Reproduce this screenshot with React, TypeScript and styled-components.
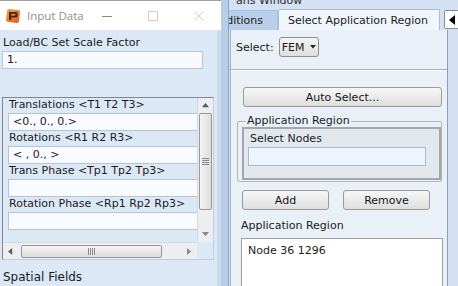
import React from 'react';
import styled, { createGlobalStyle } from 'styled-components';

const Global = createGlobalStyle`
  html, body { margin: 0; padding: 0; background: #dde8f6; }
  body { font-family: "DejaVu Sans", Verdana, sans-serif; font-size: 11px; color: #1b1b1b; }
  * { box-sizing: border-box; }
`;

const Screen = styled.div`
  display: flex;
  width: 458px;
  height: 286px;
  overflow: hidden;
`;

const LeftWindow = styled.div`
  width: 221px;
  flex: none;
  display: flex;
  flex-direction: column;
  border-top: 1px solid #a0a0a0;
`;

const TitleBar = styled.div`
  height: 29px;
  flex: none;
  background: #ffffff;
  display: flex;
  align-items: center;
  padding-left: 5px;
`;

const TitleText = styled.span`
  font-family: "Open Sans", "Noto Sans", sans-serif;
  font-size: 11.5px;
  color: #8e8e8e;
  margin-left: 6px;
  white-space: nowrap;
`;

const WinControls = styled.div`
  margin-left: auto;
  display: flex;
  height: 100%;
`;

const WinButton = styled.div`
  width: 46px;
  display: flex;
  align-items: center;
  justify-content: center;
`;

const LeftBody = styled.div`
  flex: 1;
  background: #dde8f6;
  border-right: 4px solid #c9d9ee;
  padding: 6px 0 0 2px;
  display: flex;
  flex-direction: column;
`;

const FieldLabel = styled.div`
  line-height: 14px;
  padding-left: 1px;
  white-space: nowrap;
`;

const ScaleInput = styled.div`
  width: 201px;
  height: 18px;
  margin-top: 1px;
  background: #f6f9fd;
  border: 1px solid #b9c6d6;
  padding-left: 4px;
  line-height: 16px;
`;

const ScrollPanel = styled.div`
  margin-top: 28px;
  width: 212px;
  height: 163px;
  border: 1px solid #7f8690;
  border-right-color: #c4ccd6;
  border-bottom-color: #c4ccd6;
  display: grid;
  grid-template-columns: 1fr 16px;
  grid-template-rows: 1fr 17px;
  background: #dde8f6;
`;

const PanelRows = styled.div`
  display: flex;
  flex-direction: column;
  padding-left: 5px;
  overflow: hidden;
`;

const RowLabel = styled.div`
  height: 15px;
  line-height: 14px;
  padding-left: 1px;
  white-space: nowrap;
`;

const RowInput = styled.div`
  height: 18px;
  background: #f8fbff;
  border: 1px solid #b7c4d4;
  border-right: none;
  padding-left: 4px;
  line-height: 16px;
  white-space: nowrap;
`;

const VScroll = styled.div`
  background: #eceef1;
  border-left: 1px solid #d5d9de;
  display: flex;
  flex-direction: column;
  align-items: center;
`;

const ArrowCell = styled.div<{ $h?: number; $w?: number }>`
  height: ${(p) => p.$h ?? 15}px;
  width: ${(p) => p.$w ?? 15}px;
  flex: none;
  display: flex;
  align-items: center;
  justify-content: center;
`;

const Spacer = styled.div`
  flex: 1;
`;

const VThumb = styled.div`
  width: 13px;
  height: 97px;
  border: 1px solid #979797;
  border-radius: 2px;
  background: linear-gradient(to right, #f4f4f4, #dcdcdc);
  display: flex;
  align-items: center;
  justify-content: center;
`;

const HScroll = styled.div`
  background: #eceef1;
  border-top: 1px solid #d5d9de;
  display: flex;
  align-items: center;
`;

const HThumb = styled.div`
  width: 141px;
  height: 13px;
  margin-left: 3px;
  border: 1px solid #979797;
  border-radius: 2px;
  background: linear-gradient(to bottom, #f4f4f4, #dcdcdc);
  display: flex;
  align-items: center;
  justify-content: center;
`;

const Corner = styled.div`
  background: #dde8f6;
`;

const SectionLabel = styled.div`
  margin-top: 10px;
  font-size: 12px;
  line-height: 14px;
  padding-left: 1px;
`;

const Gutter = styled.div`
  width: 7px;
  flex: none;
  background: #b9cde6;
`;

const RightWindow = styled.div`
  flex: 1;
  display: flex;
  flex-direction: column;
  background: #d3e1f2;
  border-left: 1px solid #8ea5c1;
`;

const TopStrip = styled.div`
  height: 9px;
  flex: none;
  padding-left: 7px;
  overflow: hidden;
  display: flex;
  align-items: flex-end;
`;

const TopText = styled.span`
  font-size: 11px;
  line-height: 11px;
  height: 11px;
  margin-bottom: 3px;
  flex: none;
  color: #2c2c2c;
  white-space: nowrap;
`;

const TabRow = styled.div`
  height: 21px;
  flex: none;
  display: flex;
  align-items: flex-end;
`;

const Tab = styled.div<{ $active?: boolean }>`
  height: ${(p) => (p.$active ? 21 : 20)}px;
  display: flex;
  align-items: center;
  white-space: nowrap;
  overflow: hidden;
  background: ${(p) => (p.$active ? '#f1f6fc' : '#b9cfe9')};
  border: 1px solid ${(p) => (p.$active ? '#a8bcd6' : '#a9c0dd')};
  border-bottom: none;
  border-radius: 2px 2px 0 0;
`;

const ClippedTab = styled(Tab)`
  width: 49px;
  justify-content: flex-end;
  padding-right: 14px;
  border-left: none;
`;

const ActiveTab = styled(Tab)`
  width: 162px;
  padding-left: 9px;
`;

const TabScroll = styled.div`
  margin-left: 4px;
  margin-bottom: 1px;
  width: 16px;
  height: 19px;
  flex: none;
  background: #ffffff;
  border: 1px solid #8c8c8c;
  border-radius: 2px;
  display: flex;
  align-items: center;
  justify-content: center;
`;

const TabPage = styled.div`
  flex: 1;
  width: 218px;
  margin-left: 1px;
  background: #e9f0f8;
  border-left: 1px solid #9fb3cc;
  border-right: 1px solid #8e9db0;
  display: flex;
  flex-direction: column;
`;

const SelectRow = styled.div`
  display: flex;
  align-items: center;
  gap: 5px;
  margin-top: 7px;
  padding-left: 5px;
  height: 20px;
`;

const Dropdown = styled.div`
  width: 40px;
  height: 20px;
  border: 1px solid #8d8d8d;
  border-radius: 3px;
  background: linear-gradient(to bottom, #f5f5f5, #dedede);
  display: flex;
  align-items: center;
  padding-left: 2px;
  gap: 6px;
`;

const Separator = styled.div`
  margin-top: 12px;
  height: 2px;
  border-top: 1px solid #a9adb3;
  border-bottom: 1px solid #ffffff;
`;

const Button = styled.div<{ $w: number }>`
  width: ${(p) => p.$w}px;
  height: 20px;
  flex: none;
  border: 1px solid #9a9a9a;
  border-radius: 3px;
  background: linear-gradient(to bottom, #f7f7f7, #dedede);
  display: flex;
  align-items: center;
  justify-content: center;
  color: #151515;
`;

const AutoButton = styled(Button)`
  margin: 16px 0 0 12px;
`;

const Group = styled.fieldset`
  margin: 8px 0 0 6px;
  width: 205px;
  padding: 0 0 1px 4px;
  border: 1px solid #b2b6bb;
  border-radius: 2px;
  min-width: 0;
`;

const Legend = styled.legend`
  padding: 0 1px;
  margin-left: 4px;
  line-height: 12px;
`;

const InnerBox = styled.div`
  height: 53px;
  border: 2px solid #a3a6aa;
  background: #e3e8ef;
  padding: 3px 0 0 4px;
`;

const InnerLabel = styled.div`
  line-height: 14px;
  padding-left: 2px;
`;

const InnerInput = styled.div`
  margin-top: 1px;
  width: 178px;
  height: 19px;
  background: #eef4fb;
  border: 1px solid #a9bbd1;
`;

const ButtonRow = styled.div`
  display: flex;
  gap: 14px;
  margin: 8px 0 0 11px;
`;

const PlainLabel = styled.div`
  margin: 9px 0 0 10px;
  line-height: 14px;
`;

const TextArea = styled.div`
  margin: 5px 0 0 10px;
  width: 202px;
  height: 60px;
  background: #ffffff;
  border: 1px solid #9d9d9d;
  padding: 5px 6px;
  line-height: 14px;
`;

const Triangle = ({ dir, size = 7, color = '#5a5a5a' }: { dir: 'up' | 'down' | 'left' | 'right'; size?: number; color?: string }) => {
  const s = size;
  const pts: Record<string, string> = {
    up: `0,${s * 0.6} ${s / 2},0 ${s},${s * 0.6}`,
    down: `0,0 ${s / 2},${s * 0.6} ${s},0`,
    left: `${s * 0.6},0 0,${s / 2} ${s * 0.6},${s}`,
    right: `0,0 ${s * 0.6},${s / 2} 0,${s}`,
  };
  const vertical = dir === 'up' || dir === 'down';
  return (
    <svg width={vertical ? s : s * 0.6} height={vertical ? s * 0.6 : s} style={{ display: 'block' }}>
      <polygon points={pts[dir]} fill={color} />
    </svg>
  );
};

const Grip = ({ vertical }: { vertical?: boolean }) => (
  <svg width={7} height={7} style={{ display: 'block' }}>
    {[0, 2, 4, 6].map((i) =>
      vertical ? (
        <rect key={i} x={0} y={i} width={7} height={1} fill="#8a8a8a" />
      ) : (
        <rect key={i} x={i} y={0} width={1} height={7} fill="#8a8a8a" />
      )
    )}
  </svg>
);

const AppIcon = () => (
  <svg width="16" height="16" viewBox="0 0 16 16" style={{ display: 'block', flex: 'none' }}>
    <defs>
      <linearGradient id="ig" x1="0" y1="0" x2="1" y2="1">
        <stop offset="0" stopColor="#f7a14a" />
        <stop offset="1" stopColor="#d9601c" />
      </linearGradient>
    </defs>
    <path d="M2 3 Q2 1 4 1 L13 2 Q15 2 15 4 L14 13 Q14 15 12 15 L3 14 Q1 14 1 12 Z" fill="url(#ig)" />
    <path d="M4 4 H11 Q12.5 4 12.5 5.5 V8 Q12.5 9.5 11 9.5 H6.2 V12 H4 Z M6.2 5.8 V7.8 H10.3 V5.8 Z" fill="#4a2510" fillRule="evenodd" />
  </svg>
);

const Minimize = () => (
  <svg width="10" height="10" style={{ display: 'block' }}>
    <rect x="0" y="5" width="10" height="1" fill="#8a8a8a" />
  </svg>
);
const Maximize = () => (
  <svg width="10" height="10" style={{ display: 'block' }}>
    <rect x="0.5" y="0.5" width="9" height="9" fill="none" stroke="#d0d0d0" />
  </svg>
);
const Close = () => (
  <svg width="10" height="10" style={{ display: 'block' }}>
    <path d="M0.5 0.5 L9.5 9.5 M9.5 0.5 L0.5 9.5" stroke="#d0d0d0" strokeWidth="1" />
  </svg>
);

const rows = [
  { label: 'Translations <T1 T2 T3>', value: '<0., 0., 0.>' },
  { label: 'Rotations <R1 R2 R3>', value: '< , 0., >' },
  { label: 'Trans Phase <Tp1 Tp2 Tp3>', value: '' },
  { label: 'Rotation Phase <Rp1 Rp2 Rp3>', value: '' },
];

export default function App() {
  return (
    <>
      <Global />
      <Screen>
        <LeftWindow>
          <TitleBar>
            <AppIcon />
            <TitleText>Input Data</TitleText>
            <WinControls>
              <WinButton><Minimize /></WinButton>
              <WinButton><Maximize /></WinButton>
              <WinButton><Close /></WinButton>
            </WinControls>
          </TitleBar>
          <LeftBody>
            <FieldLabel>Load/BC Set Scale Factor</FieldLabel>
            <ScaleInput>1.</ScaleInput>
            <ScrollPanel>
              <PanelRows>
                {rows.map((r) => (
                  <React.Fragment key={r.label}>
                    <RowLabel>{r.label}</RowLabel>
                    <RowInput>{r.value}</RowInput>
                  </React.Fragment>
                ))}
              </PanelRows>
              <VScroll>
                <ArrowCell $h={15}><Triangle dir="up" /></ArrowCell>
                <VThumb><Grip vertical /></VThumb>
                <Spacer />
                <ArrowCell $h={15}><Triangle dir="down" color="#8a8a8a" /></ArrowCell>
              </VScroll>
              <HScroll>
                <ArrowCell $w={15}><Triangle dir="left" /></ArrowCell>
                <HThumb><Grip /></HThumb>
                <Spacer />
                <ArrowCell $w={15}><Triangle dir="right" color="#8a8a8a" /></ArrowCell>
              </HScroll>
              <Corner />
            </ScrollPanel>
            <SectionLabel>Spatial Fields</SectionLabel>
          </LeftBody>
        </LeftWindow>
        <Gutter />
        <RightWindow>
          <TopStrip>
            <TopText>ans Window</TopText>
          </TopStrip>
          <TabRow>
            <ClippedTab>Conditions</ClippedTab>
            <ActiveTab $active>Select Application Region</ActiveTab>
            <TabScroll><Triangle dir="left" size={10} color="#000" /></TabScroll>
          </TabRow>
          <TabPage>
            <SelectRow>
              <span>Select:</span>
              <Dropdown>
                <span>FEM</span>
                <Triangle dir="down" size={6} color="#222" />
              </Dropdown>
            </SelectRow>
            <Separator />
            <AutoButton $w={199}>Auto Select...</AutoButton>
            <Group>
              <Legend>Application Region</Legend>
              <InnerBox>
                <InnerLabel>Select Nodes</InnerLabel>
                <InnerInput />
              </InnerBox>
            </Group>
            <ButtonRow>
              <Button $w={87}>Add</Button>
              <Button $w={87}>Remove</Button>
            </ButtonRow>
            <PlainLabel>Application Region</PlainLabel>
            <TextArea>Node 36 1296</TextArea>
          </TabPage>
        </RightWindow>
      </Screen>
    </>
  );
}
